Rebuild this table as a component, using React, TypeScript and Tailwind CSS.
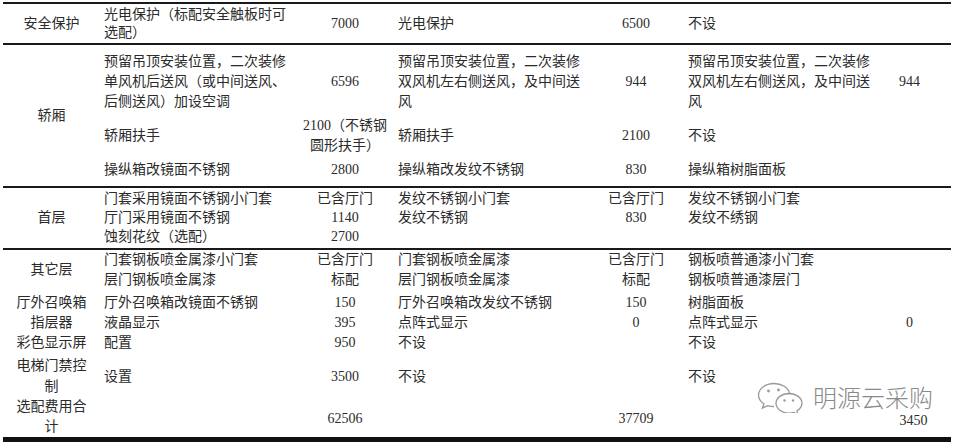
// ============================================================================
// ELEVATOR OPTIONS COMPARISON TABLE
// ============================================================================

const GRID = 'grid grid-cols-[97px_200px_90px_200px_92px_178px_91px] whitespace-nowrap';

function WeChatMark() {
  return (
    <svg width="52" height="32" viewBox="0 0 52 32" fill="none" stroke="#9a9a9a" strokeWidth="1.3">
      <path d="M19 2.5c-8.6 0-15.5 5.2-15.5 11.6 0 3.6 2.1 6.7 5.4 8.8l-1.6 4.3 5.3-2.6c2 .6 4.1.9 6.4.9" />
      <path d="M34.5 12.2C33.3 6.7 26.8 2.5 19 2.5" />
      <circle cx="13.5" cy="10" r="1.4" fill="#9a9a9a" stroke="none" />
      <circle cx="23.5" cy="9" r="1.4" fill="#9a9a9a" stroke="none" />
      <path
        d="M34 12.5c-7.2 0-13 4.4-13 9.8s5.8 9.8 13 9.8c1.7 0 3.3-.2 4.8-.7l4.3 2.1-1.2-3.6c2.9-1.8 5.1-4.6 5.1-7.6 0-5.4-5.8-9.8-13-9.8z"
        fill="white"
      />
      <circle cx="29.5" cy="19.5" r="1.2" fill="#9a9a9a" stroke="none" />
      <circle cx="38" cy="19.5" r="1.2" fill="#9a9a9a" stroke="none" />
    </svg>
  );
}

export default function App() {
  return (
    <div className="relative w-[963px] h-[442px] overflow-hidden bg-white text-[14px] text-[#2b2b2b] font-['Liberation_Serif','Noto_Sans_CJK_SC',serif]">
      <div className="ml-[3px] mt-[2px] w-[948px] border-t-2 border-[#1a1a1a]">
        {/* 安全保护 */}
        <div className={`${GRID} pt-[2px] pb-[1px] leading-[18px] border-b-2 border-[#1a1a1a]`}>
          <div className="self-center text-center">安全保护</div>
          <div className="pl-[4px]">
            光电保护（标配安全触板时可
            <br />
            选配）
          </div>
          <div className="self-center text-center">7000</div>
          <div className="self-center pl-[8px]">光电保护</div>
          <div className="self-center text-center">6500</div>
          <div className="self-center pl-[6px]">不设</div>
          <div />
        </div>

        {/* 轿厢 */}
        <div className={`${GRID} gap-y-[4px] pt-[7px] pb-[6px] leading-[20px] border-b-2 border-[#1a1a1a]`}>
          <div className="row-span-3 self-center text-center">轿厢</div>

          <div className="pl-[4px]">
            预留吊顶安装位置，二次装修
            <br />
            单风机后送风（或中间送风、
            <br />
            后侧送风）加设空调
          </div>
          <div className="self-center text-center">6596</div>
          <div className="pl-[8px]">
            预留吊顶安装位置，二次装修
            <br />
            双风机左右侧送风，及中间送
            <br />
            风
          </div>
          <div className="self-center text-center">944</div>
          <div className="pl-[6px]">
            预留吊顶安装位置，二次装修
            <br />
            双风机左右侧送风，及中间送
            <br />
            风
          </div>
          <div className="self-center pl-[8px] text-center">944</div>

          <div className="self-center pl-[4px]">轿厢扶手</div>
          <div className="text-center">
            2100（不锈钢
            <br />
            圆形扶手）
          </div>
          <div className="self-center pl-[8px]">轿厢扶手</div>
          <div className="self-center text-center">2100</div>
          <div className="self-center pl-[6px]">不设</div>
          <div />

          <div className="pl-[4px]">操纵箱改镜面不锈钢</div>
          <div className="text-center">2800</div>
          <div className="pl-[8px]">操纵箱改发纹不锈钢</div>
          <div className="text-center">830</div>
          <div className="pl-[6px]">操纵箱树脂面板</div>
          <div />
        </div>

        {/* 首层 */}
        <div className={`${GRID} pt-[1px] pb-[2px] leading-[19px] border-b-2 border-[#1a1a1a]`}>
          <div className="self-center text-center">首层</div>
          <div className="pl-[4px]">
            门套采用镜面不锈钢小门套
            <br />
            厅门采用镜面不锈钢
            <br />
            蚀刻花纹（选配）
          </div>
          <div className="text-center">
            已含厅门
            <br />
            1140
            <br />
            2700
          </div>
          <div className="pl-[8px]">
            发纹不锈钢小门套
            <br />
            发纹不锈钢
          </div>
          <div className="text-center">
            已含厅门
            <br />
            830
          </div>
          <div className="pl-[6px]">
            发纹不锈钢小门套
            <br />
            发纹不绣钢
          </div>
          <div />
        </div>

        {/* 其它层 and the rest */}
        <div className="leading-[20px] border-b-[5px] border-[#111]">
          <div className={GRID}>
            <div className="self-center text-center">其它层</div>
            <div className="pl-[4px]">
              门套钢板喷金属漆小门套
              <br />
              层门钢板喷金属漆
            </div>
            <div className="text-center">
              已含厅门
              <br />
              标配
            </div>
            <div className="pl-[8px]">
              门套钢板喷金属漆
              <br />
              层门钢板喷金属漆
            </div>
            <div className="text-center">
              已含厅门
              <br />
              标配
            </div>
            <div className="pl-[6px]">
              钢板喷普通漆小门套
              <br />
              钢板喷普通漆层门
            </div>
            <div />
          </div>

          <div className={`${GRID} pt-[3px]`}>
            <div className="text-center">厅外召唤箱</div>
            <div className="pl-[4px]">厅外召唤箱改镜面不锈钢</div>
            <div className="text-center">150</div>
            <div className="pl-[8px]">厅外召唤箱改发纹不锈钢</div>
            <div className="text-center">150</div>
            <div className="pl-[6px]">树脂面板</div>
            <div />
          </div>

          <div className={GRID}>
            <div className="text-center">指层器</div>
            <div className="pl-[4px]">液晶显示</div>
            <div className="text-center">395</div>
            <div className="pl-[8px]">点阵式显示</div>
            <div className="text-center">0</div>
            <div className="pl-[6px]">点阵式显示</div>
            <div className="pl-[8px] text-center">0</div>
          </div>

          <div className={GRID}>
            <div className="text-center">彩色显示屏</div>
            <div className="pl-[4px]">配置</div>
            <div className="text-center">950</div>
            <div className="pl-[8px]">不设</div>
            <div />
            <div className="pl-[6px]">不设</div>
            <div />
          </div>

          <div className={`${GRID} pt-[2px] leading-[21px]`}>
            <div className="text-center">
              电梯门禁控
              <br />
              制
            </div>
            <div className="self-center pl-[4px]">设置</div>
            <div className="self-center text-center">3500</div>
            <div className="self-center pl-[8px]">不设</div>
            <div />
            <div className="self-center pl-[6px]">不设</div>
            <div />
          </div>

          <div className={GRID}>
            <div className="text-center">
              选配费用合
              <br />
              计
            </div>
            <div />
            <div className="self-center pt-[4px] text-center">62506</div>
            <div />
            <div className="self-center pt-[4px] text-center">37709</div>
            <div />
            <div className="self-end pb-[6px] pl-[16px] text-center">3450</div>
          </div>
        </div>
      </div>

      {/* watermark */}
      <div className="absolute left-[755px] top-[381px] flex items-center gap-[6px]">
        <WeChatMark />
        <span className="text-[24px] leading-none font-light text-[#8a8a8a] font-['Noto_Sans_CJK_SC',sans-serif]">
          明源云采购
        </span>
      </div>
    </div>
  );
}
